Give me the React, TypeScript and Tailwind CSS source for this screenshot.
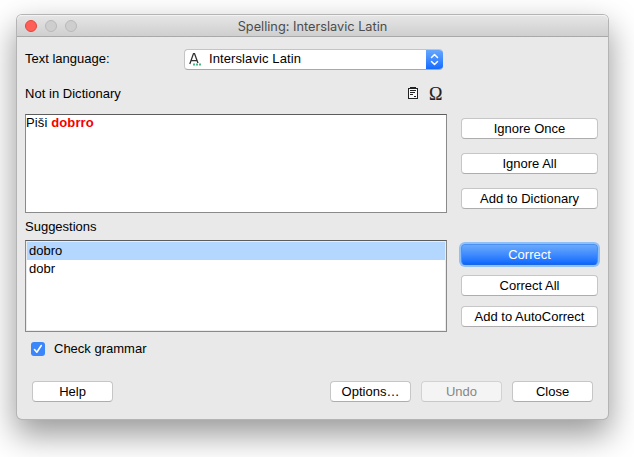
import React from "react";

type ButtonProps = {
  label: string;
  className?: string;
  variant?: "normal" | "primary" | "disabled";
};

const variants = {
  normal: "border-[#c6c6c6] border-b-[#adadad] bg-white text-black",
  primary:
    "border-[#4a90f5] border-b-[#1a66e8] bg-linear-to-b from-[#6aaafc] to-[#0a67fe] text-white shadow-[0_0_0_2px_#8fc1f8]",
  disabled: "border-[#d2d2d2] border-b-[#c8c8c8] bg-[#f4f4f4] text-[#868686]",
};

function Button({ label, className = "", variant = "normal" }: ButtonProps) {
  return (
    <button
      type="button"
      className={`flex h-[21px] shrink-0 items-center justify-center rounded-[4px] border leading-[19px] ${variants[variant]} ${className}`}
    >
      {label}
    </button>
  );
}

function LanguageIcon() {
  return (
    <svg width="13" height="14" viewBox="0 0 13 14" fill="none">
      <path d="M.8 11 4.5.6h1L9.3 11M2.2 7.6h5.6" stroke="#333" strokeWidth="1.3" />
      <path d="M4 10h10v4H4z" fill="white" />
      <path d="M4 10.5h2v2H4zM7 10.5h2v2H7zM10 10.5h2v2h-2z" fill="#45b884" />
    </svg>
  );
}

function PasteIcon() {
  return (
    <svg width="10" height="12" viewBox="0 0 10 12" shapeRendering="crispEdges">
      <path fill="#f7f7f7" d="M1 2h8v9H1z" />
      <path fill="#222" fillRule="evenodd" d="M0 1h2V0h6v1h2v11H0zM1 2v9h8V2z" />
      <path fill="#222" d="M2 3h6v1H2zM2 5h5v1H2zM2 7h3v1H2zM6 9h2v1H6z" />
    </svg>
  );
}

export default function App() {
  return (
    <div className="h-[457px] w-[634px] overflow-hidden bg-white pt-[15px] pl-[17px] font-['Liberation_Sans',Arial,sans-serif] text-[13px] text-black">
      <main className="flex h-[404px] w-[591px] flex-col rounded-[5px] bg-[#e9e9e9] shadow-[0_0_0_1px_#b4b4b4,0_14px_32px_2px_rgba(0,0,0,0.4)]">
        <header className="flex h-[22px] shrink-0 items-center rounded-t-[5px] border-b border-[#a9a9a9] bg-linear-to-b from-[#e6e6e6] to-[#cfcfcf] shadow-[inset_0_1px_0_#f3f3f3]">
          <div className="flex w-[68px] gap-2 pl-2">
            <span className="size-3 rounded-full border border-[#e2463f] bg-[#ff5f57]" />
            <span className="size-3 rounded-full border border-[#b9b9b9] bg-[#cecece]" />
            <span className="size-3 rounded-full border border-[#b9b9b9] bg-[#cecece]" />
          </div>
          <h1 className="mr-[68px] flex-1 pt-[2px] text-center font-['Inter',sans-serif] text-[12.75px] leading-5 whitespace-nowrap text-[#4c4c4c]">
            Spelling: Interslavic Latin
          </h1>
        </header>

        <div className="mt-3 flex h-[21px] shrink-0 items-center pl-2">
          <span className="w-[159px] pb-[2px] leading-[18px]">Text language:</span>
          <div className="flex h-[21px] w-[259px] overflow-hidden rounded-[4px] border border-r-0 border-[#c4c4c4] border-b-[#a8a8a8] bg-white">
            <div className="flex flex-1 items-center pl-1">
              <LanguageIcon />
              <span className="ml-[7px] pb-[2px] leading-[17px] tracking-[0.1px]">Interslavic Latin</span>
            </div>
            <div className="-my-px flex h-[21px] w-[17px] items-center justify-center bg-linear-to-b from-[#6aaafc] to-[#0a67fe]">
              <svg width="9" height="13" viewBox="0 0 9 13" fill="none" stroke="white" strokeWidth="1.5" strokeLinecap="round" strokeLinejoin="round">
                <path d="m1.5 4.5 3-3 3 3M1.5 8.5l3 3 3-3" />
              </svg>
            </div>
          </div>
        </div>

        <div className="mt-[14px] flex h-5 shrink-0 items-center pr-[165px] pl-2">
          <span className="flex-1 leading-5 tracking-[0.03px]">Not in Dictionary</span>
          <span className="pb-[2px]">
            <PasteIcon />
          </span>
          <span className="ml-[11px] w-[14px] font-['Liberation_Serif',serif] text-[18px] leading-5 text-[#222] [-webkit-text-stroke:0.15px_#222]">Ω</span>
        </div>

        <div className="mt-[10px] flex h-[99px] shrink-0 pl-2">
          <div className="w-[422px] border border-[#8a8a8a] border-t-[#5c5c5c] bg-white leading-4 tracking-[0.13px]">
            Piši <b className="text-[#f60000]">dobrro</b>
          </div>
          <div className="ml-[14px] flex flex-col gap-[14px] pt-1">
            <Button label="Ignore Once" className="w-[137px]" />
            <Button label="Ignore All" className="w-[137px]" />
            <Button label="Add to Dictionary" className="w-[137px]" />
          </div>
        </div>

        <div className="mt-1 h-5 shrink-0 pl-2 leading-5">Suggestions</div>

        <div className="mt-[3px] flex h-[92px] shrink-0 pl-2">
          <ul className="w-[422px] border border-[#8a8a8a] border-t-[#5c5c5c] bg-white p-px shadow-[inset_0_0_0_1px_#ececec]">
            <li className="h-[18px] bg-[#b3d7ff] pl-[2px] leading-[18px]">dobro</li>
            <li className="h-[18px] pl-[2px] leading-[18px]">dobr</li>
          </ul>
          <div className="ml-[14px] flex flex-col gap-[10px] pt-1">
            <Button label="Correct" variant="primary" className="w-[137px]" />
            <Button label="Correct All" className="w-[137px]" />
            <Button label="Add to AutoCorrect" className="w-[137px]" />
          </div>
        </div>

        <label className="mt-[7px] flex h-5 shrink-0 items-center pl-[14px]">
          <span className="flex size-[14px] items-center justify-center rounded-[3px] bg-[#3b86fb]">
            <svg width="10" height="10" viewBox="0 0 10 10" fill="none" stroke="white" strokeWidth="1.6" strokeLinecap="round" strokeLinejoin="round">
              <path d="m1.5 5.5 2.3 2.7L8.3 1.5" />
            </svg>
          </span>
          <span className="ml-[9px] leading-5">Check grammar</span>
        </label>

        <footer className="mt-[22px] flex gap-[10px] pr-[15px] pl-[15px]">
          <Button label="Help" className="mr-auto w-[81px]" />
          <Button label="Options…" className="w-[81px]" />
          <Button label="Undo" variant="disabled" className="w-[81px]" />
          <Button label="Close" className="w-[81px]" />
        </footer>
      </main>
    </div>
  );
}
